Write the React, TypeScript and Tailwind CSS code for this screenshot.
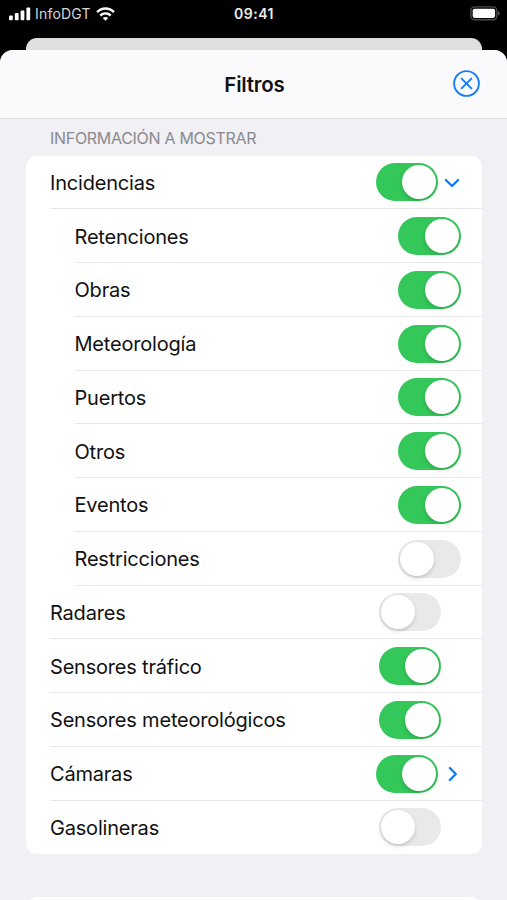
import React, {useState} from 'react';
import clsx from 'clsx';

type Arrow = 'down' | 'right';

interface Filter {
  label: string;
  enabled: boolean;
  nested?: boolean;
  arrow?: Arrow;
}

const initialFilters: Filter[] = [
  {label: 'Incidencias', enabled: true, arrow: 'down'},
  {label: 'Retenciones', enabled: true, nested: true},
  {label: 'Obras', enabled: true, nested: true},
  {label: 'Meteorología', enabled: true, nested: true},
  {label: 'Puertos', enabled: true, nested: true},
  {label: 'Otros', enabled: true, nested: true},
  {label: 'Eventos', enabled: true, nested: true},
  {label: 'Restricciones', enabled: false, nested: true},
  {label: 'Radares', enabled: false},
  {label: 'Sensores tráfico', enabled: true},
  {label: 'Sensores meteorológicos', enabled: true},
  {label: 'Cámaras', enabled: true, arrow: 'right'},
  {label: 'Gasolineras', enabled: false},
];

const arrowPaths: Record<Arrow, string> = {
  down: 'M2.9 7L9 13L15.1 7',
  right: 'M6.8 3L12.8 9L6.8 15',
};

const StatusBar = () => (
  <div className="grid h-[38px] shrink-0 grid-cols-3 items-start pr-[7px] pl-[9px] text-white">
    <div className="flex h-[27px] items-center">
      <svg width="22" height="14" viewBox="0 0 22 14" fill="currentColor">
        <rect x="0" y="8.5" width="3.8" height="4.8" rx="1" />
        <rect x="5.8" y="6" width="3.8" height="7.3" rx="1" />
        <rect x="11.6" y="3.4" width="3.8" height="9.9" rx="1" />
        <rect x="17.4" y="0.6" width="3.8" height="12.7" rx="1" />
      </svg>
      <span className="ml-[4px] text-[14px] tracking-[0.2px] text-[#d6d6d6]">InfoDGT</span>
      <svg className="ml-[5px]" width="19" height="14" viewBox="0 0 19 14" fill="none">
        <path d="M1.1 5.2C5.9 0.4 13.1 0.4 17.9 5.2" stroke="currentColor" strokeWidth="2.5" />
        <path d="M4.3 8.5C7.3 5.7 11.7 5.7 14.7 8.5" stroke="currentColor" strokeWidth="2.4" />
        <path d="M9.5 13.7L6.8 11C8.3 9.7 10.7 9.7 12.2 11Z" fill="currentColor" />
      </svg>
    </div>
    <div className="flex h-[27px] items-center justify-center pr-[1px] text-[14px] font-semibold tracking-[0.5px] text-[#ececec]">
      09:41
    </div>
    <div className="flex h-[26px] items-center justify-end">
      <svg width="30" height="15" viewBox="0 0 30 15">
        <rect x="0.9" y="0.9" width="26" height="12.8" rx="3.6" fill="none" stroke="#4b4b4b" strokeWidth="1.4" />
        <rect x="2.7" y="2.7" width="22.4" height="9.2" rx="1.8" fill="white" />
        <path d="M27.9 5.2C30.3 6 30.3 8.6 27.9 9.4Z" fill="#5b5b5b" />
      </svg>
    </div>
  </div>
);

interface ToggleProps {
  label: string;
  enabled: boolean;
  onClick: () => void;
}

const Toggle = ({label, enabled, onClick}: ToggleProps) => (
  <button
    type="button"
    role="switch"
    aria-checked={enabled}
    aria-label={label}
    onClick={onClick}
    className={clsx(
      'flex h-[38px] w-[62.5px] shrink-0 items-center rounded-full px-[2px]',
      enabled ? 'justify-end bg-[#34c759]' : 'justify-start bg-[#e9e9eb]',
    )}
  >
    <span className="size-[34px] rounded-full bg-white shadow-[0_2px_4px_rgba(0,0,0,0.16)]" />
  </button>
);

const ArrowIcon = ({arrow}: {arrow: Arrow}) => (
  <svg
    className="shrink-0"
    width="18"
    height="18"
    viewBox="0 0 18 18"
    fill="none"
    stroke="#0a7aff"
    strokeWidth="2.3"
    strokeLinecap="round"
    strokeLinejoin="round"
  >
    <path d={arrowPaths[arrow]} />
  </svg>
);

interface FilterRowProps {
  filter: Filter;
  isLast: boolean;
  onToggle: () => void;
}

const FilterRow = ({filter, isLast, onToggle}: FilterRowProps) => (
  <div className={filter.nested ? 'pl-[49px]' : 'pl-[24.5px]'}>
    <div
      className={clsx(
        'flex h-[53.75px] items-center justify-between border-b pt-[1px]',
        isLast ? 'border-transparent' : 'border-[#e8e8ea]',
        filter.arrow && 'pr-[20.5px]',
        !filter.arrow && (filter.nested ? 'pr-[21px]' : 'pr-[40.5px]'),
      )}
    >
      <span className="pt-[1px] text-[20px] tracking-[-0.2px] whitespace-nowrap text-[#111111]">
        {filter.label}
      </span>
      <div className="flex items-center gap-[5px]">
        <Toggle label={filter.label} enabled={filter.enabled} onClick={onToggle} />
        {filter.arrow && <ArrowIcon arrow={filter.arrow} />}
      </div>
    </div>
  </div>
);

const App = () => {
  const [filters, setFilters] = useState(initialFilters);

  const handleToggle = (label: string) => {
    setFilters(
      filters.map((filter) =>
        filter.label === label ? {...filter, enabled: !filter.enabled} : filter,
      ),
    );
  };

  return (
    <div className="flex h-[900px] w-[507px] flex-col overflow-hidden bg-black font-['Inter','Liberation_Sans',sans-serif]">
      <StatusBar />
      <div className="mx-[25.5px] h-[12px] shrink-0 rounded-t-[11px] bg-[#dfdfe0]" />
      <div className="flex flex-1 flex-col overflow-hidden rounded-t-[13px] bg-[#f0f0f5]">
        <div className="grid h-[69px] shrink-0 grid-cols-[1fr_auto_1fr] items-center border-b border-[#dededf] bg-[#fafafc] px-[27px]">
          <span />
          <h1 className="pt-[2px] pl-[2px] text-[20.5px] font-semibold tracking-[-0.2px] text-[#111111]">
            Filtros
          </h1>
          <button type="button" aria-label="Cerrar" className="justify-self-end pb-[1px]">
            <svg width="27" height="27" viewBox="0 0 27 27" fill="none" stroke="#147efb" strokeWidth="1.9" strokeLinecap="round">
              <circle cx="13.5" cy="13.5" r="12.4" />
              <path d="M8.6 8.6L18.4 18.4M18.4 8.6L8.6 18.4" />
            </svg>
          </button>
        </div>
        <h2 className="flex h-[36.5px] shrink-0 items-center pt-[1px] pl-[50px] text-[16px] tracking-[-0.3px] text-[#8a8a8e]">
          INFORMACIÓN A MOSTRAR
        </h2>
        <div className="mx-[25.5px] shrink-0 rounded-[11px] bg-white">
          {filters.map((filter, index) => (
            <FilterRow
              key={filter.label}
              filter={filter}
              isLast={index === filters.length - 1}
              onToggle={() => handleToggle(filter.label)}
            />
          ))}
        </div>
        <div className="mx-[25.5px] mt-[43px] h-[54px] shrink-0 rounded-[11px] bg-white" />
      </div>
    </div>
  );
};

export default App;
